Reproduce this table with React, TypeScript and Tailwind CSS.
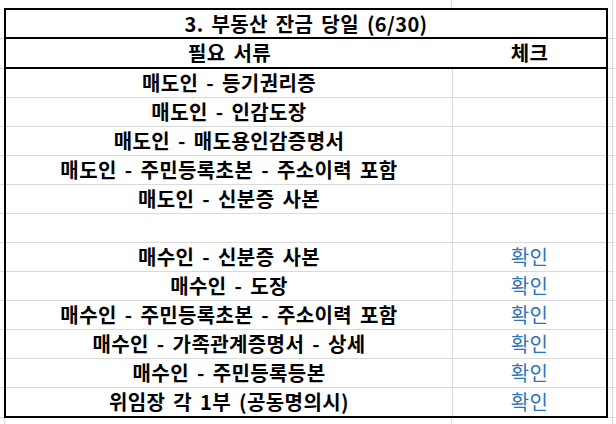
const rows: { doc: string; check?: string }[] = [
  { doc: "매도인 - 등기권리증" },
  { doc: "매도인 - 인감도장" },
  { doc: "매도인 - 매도용인감증명서" },
  { doc: "매도인 - 주민등록초본 - 주소이력 포함" },
  { doc: "매도인 - 신분증 사본" },
  { doc: "" },
  { doc: "매수인 - 신분증 사본", check: "확인" },
  { doc: "매수인 - 도장", check: "확인" },
  { doc: "매수인 - 주민등록초본 - 주소이력 포함", check: "확인" },
  { doc: "매수인 - 가족관계증명서 - 상세", check: "확인" },
  { doc: "매수인 - 주민등록등본", check: "확인" },
  { doc: "위임장 각 1부 (공동명의시)", check: "확인" },
];

const RightGutter = ({ last }: { last?: boolean }) => (
  <div className="flex w-[8px]">
    <div
      className={`w-[5px] border-r border-[#dadada] ${last ? "" : "border-b"}`}
    />
    <div className={`w-[2px] border-[#dadada] ${last ? "" : "border-b"}`} />
  </div>
);

const App = () => {
  return (
    <div className="h-[424px] w-[616px] overflow-hidden bg-white font-['Noto_Sans_CJK_KR',sans-serif] text-[20px] leading-none tracking-[0.02em] [word-spacing:3px] text-black">
      {/* top strip with sheet gridlines */}
      <div className="flex h-[8px]">
        <div className="w-[452px] border-r border-[#dadada]" />
        <div className="w-[161px] border-r border-[#dadada]" />
      </div>

      {/* title row */}
      <div className="flex h-[31px]">
        <div className="w-[4px] border-b border-[#dadada]" />
        <div className="flex w-[604px] items-center justify-center border-x-2 border-y-2 border-black font-bold">
          3. 부동산 잔금 당일 (6/30)
        </div>
        <RightGutter />
      </div>

      {/* header row */}
      <div className="flex h-[30px]">
        <div className="w-[4px] border-b border-[#dadada]" />
        <div className="flex w-[604px] border-x-2 border-b-2 border-black font-bold">
          <div className="flex w-[447px] items-center justify-center">
            필요 서류
          </div>
          <div className="flex flex-1 items-center justify-center">체크</div>
        </div>
        <RightGutter />
      </div>

      {/* data rows */}
      {rows.map((row, i) => {
        const last = i === rows.length - 1;
        return (
          <div key={i} className={`flex ${last ? "h-[30px]" : "h-[29px]"}`}>
            <div className="w-[4px] border-b border-[#dadada]" />
            <div
              className={`flex w-[604px] border-x-2 border-black ${
                last ? "border-b-2" : ""
              }`}
            >
              <div
                className={`flex w-[447px] items-center justify-center border-r border-[#dadada] font-bold ${
                  last ? "" : "border-b"
                }`}
              >
                {row.doc}
              </div>
              <div
                className={`flex flex-1 items-center justify-center border-[#dadada] text-[#2e75b6] ${
                  last ? "" : "border-b"
                }`}
              >
                {row.check}
              </div>
            </div>
            <RightGutter />
          </div>
        );
      })}

      {/* bottom strip */}
      <div className="flex h-[6px]">
        <div className="w-[5px] border-r border-[#dadada]" />
        <div className="w-[447px] border-r border-[#dadada]" />
        <div className="w-[161px] border-r border-[#dadada]" />
      </div>
    </div>
  );
};

export default App;
